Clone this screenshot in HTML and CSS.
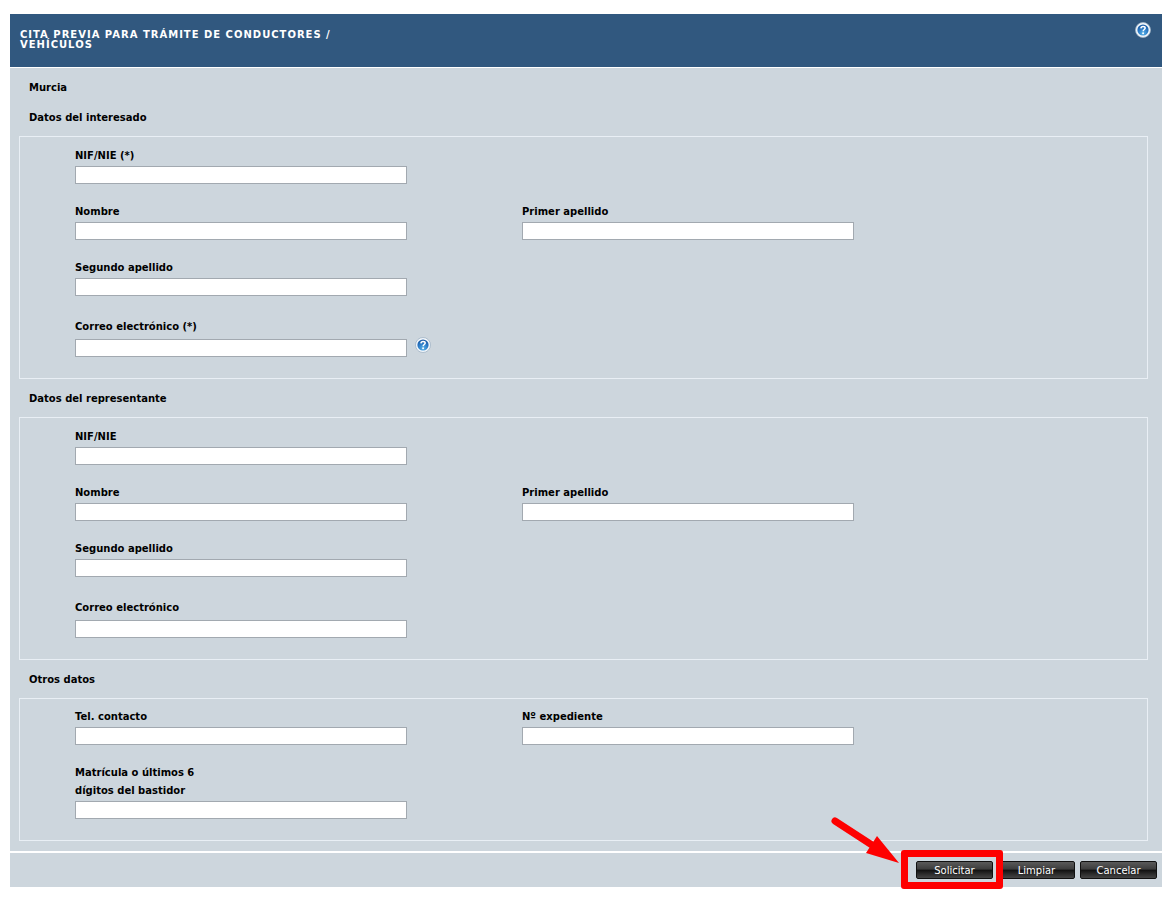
FILE: index.html
```html
<!DOCTYPE html>
<html lang="es">
<head>
<meta charset="utf-8">
<title>Cita previa para trámite de conductores / vehículos</title>
<link rel="stylesheet" href="styles.css">
</head>
<body>
<svg class="defs" width="0" height="0" aria-hidden="true">
  <defs>
    <radialGradient id="ball" cx="50%" cy="80%" r="75%">
      <stop offset="0" stop-color="#58b4ea"/>
      <stop offset="0.6" stop-color="#2a78c4"/>
      <stop offset="1" stop-color="#1c5ca6"/>
    </radialGradient>
    <symbol id="help" viewBox="0 0 16 16">
      <circle cx="8" cy="8" r="7.5" fill="#f3f8fc" stroke="#9fb3c4" stroke-width="0.8"/>
      <circle cx="8" cy="8" r="5.6" fill="url(#ball)"/>
      <path d="M5.9 6.4C6 4.9 7 4.4 8.1 4.4c1.3 0 2.1.7 2.1 1.7C10.2 7.5 8.2 7.5 8.2 9.2" fill="none" stroke="#fff" stroke-width="1.5"/>
      <circle cx="8.1" cy="11.2" r="0.95" fill="#fff"/>
    </symbol>
  </defs>
</svg>
<form class="page">
  <header class="header">
    <h1 class="title">Cita previa para trámite de conductores / vehículos</h1>
    <button type="button" class="help" aria-label="Ayuda"><svg class="help-icon"><use href="#help"/></svg></button>
  </header>
  <main class="content">
    <p class="province">Murcia</p>

    <h2 class="section-title" id="t1">Datos del interesado</h2>
    <section class="box" aria-labelledby="t1">
      <div class="field"><label for="nif">NIF/NIE (*)</label><input type="text" id="nif"></div>
      <div class="field first"><label for="nombre">Nombre</label><input type="text" id="nombre"></div>
      <div class="field"><label for="apellido1">Primer apellido</label><input type="text" id="apellido1"></div>
      <div class="field first"><label for="apellido2">Segundo apellido</label><input type="text" id="apellido2"></div>
      <div class="field first email">
        <label for="correo">Correo electrónico (*)</label><input type="text" id="correo">
        <button type="button" class="help field-help" aria-label="Ayuda sobre el correo"><svg class="help-icon"><use href="#help"/></svg></button>
      </div>
    </section>

    <h2 class="section-title" id="t2">Datos del representante</h2>
    <section class="box" aria-labelledby="t2">
      <div class="field"><label for="rnif">NIF/NIE</label><input type="text" id="rnif"></div>
      <div class="field first"><label for="rnombre">Nombre</label><input type="text" id="rnombre"></div>
      <div class="field"><label for="rapellido1">Primer apellido</label><input type="text" id="rapellido1"></div>
      <div class="field first"><label for="rapellido2">Segundo apellido</label><input type="text" id="rapellido2"></div>
      <div class="field first email"><label for="rcorreo">Correo electrónico</label><input type="text" id="rcorreo"></div>
    </section>

    <h2 class="section-title" id="t3">Otros datos</h2>
    <section class="box other" aria-labelledby="t3">
      <div class="field"><label for="tel">Tel. contacto</label><input type="text" id="tel"></div>
      <div class="field"><label for="expediente">Nº expediente</label><input type="text" id="expediente"></div>
      <div class="field first"><label for="matricula">Matrícula o últimos 6 dígitos del bastidor</label><input type="text" id="matricula"></div>
    </section>
  </main>
  <footer class="footer">
    <div class="marked">
      <button type="submit" class="btn">Solicitar</button>
      <span class="frame"></span>
      <svg class="arrow" width="72" height="50" viewBox="0 0 72 50" aria-hidden="true">
        <path d="M6 7L46 33" stroke="#fe0000" stroke-width="7" stroke-linecap="round"/>
        <path d="M48 22L70 49L37 39Z" fill="#fe0000"/>
      </svg>
    </div>
    <button type="reset" class="btn">Limpiar</button>
    <button type="button" class="btn">Cancelar</button>
  </footer>
</form>
</body>
</html>
```
FILE: styles.css
```css
* {
  box-sizing: border-box;
}

body {
  margin: 0;
  background: #fff;
  color: #000;
  font: bold 10px/18px Verdana, "DejaVu Sans", sans-serif;
}

.defs {
  position: absolute;
}

.page {
  margin: 14px 13px 13px 10px;
  background: #cdd6dd;
}

.header {
  display: flex;
  justify-content: space-between;
  align-items: flex-start;
  min-height: 54px;
  padding: 8px 11px 8px 10px;
  background: #31587f;
  border-bottom: 1px solid #fff;
}

.title {
  width: 340px;
  margin: 8px 0 0;
  color: #fff;
  font-size: 10px;
  line-height: 10px;
  letter-spacing: 1px;
  text-transform: uppercase;
}

.help {
  display: block;
  padding: 0;
  border: 0;
  background: none;
}

.help-icon {
  display: block;
  width: 16px;
  height: 16px;
}

.content {
  padding: 11px 14px 10px 9px;
}

.province {
  margin: 0 0 12px 10px;
}

.section-title {
  margin: 11px 0 9px 10px;
  font-size: 10px;
}

.box {
  display: grid;
  grid-template-columns: repeat(2, minmax(0, 332px));
  gap: 19px 115px;
  padding: 10px 55px 21px;
  border: 1px solid #e9eff5;
}

.other {
  padding-top: 9px;
}

.field {
  position: relative;
  display: flex;
  flex-direction: column;
  gap: 1px;
}

.first {
  grid-column: 1;
}

.email {
  gap: 3px;
  padding-top: 3px;
}

.field label {
  max-width: 140px;
}

.field input {
  width: 100%;
  height: 18px;
  padding: 0 3px;
  border: 1px solid #a2a9b0;
  border-radius: 0;
  background: #fff;
  font: 10px Verdana, "DejaVu Sans", sans-serif;
}

.field-help {
  position: absolute;
  right: -24px;
  bottom: 4px;
}

.footer {
  display: flex;
  justify-content: flex-end;
  gap: 5px;
  padding: 8px 5px 8px 9px;
  border-top: 2px solid #fff;
}

.marked {
  position: relative;
  display: flex;
}

.btn {
  width: 77px;
  height: 18px;
  padding: 1px 0 0;
  border: 1px solid #111;
  border-radius: 2px;
  background: linear-gradient(#5a5a5a 0%, #3c3c3c 45%, #101010 50%, #2c2c2c 75%, #444 100%);
  color: #fff;
  font: 10px/16px Verdana, "DejaVu Sans", sans-serif;
}

.frame {
  position: absolute;
  inset: -11px -10px -10px -15px;
  border: 7px solid #fe0000;
  border-radius: 3px;
}

.arrow {
  position: absolute;
  right: 92px;
  bottom: 15px;
  fill: none;
}
```
